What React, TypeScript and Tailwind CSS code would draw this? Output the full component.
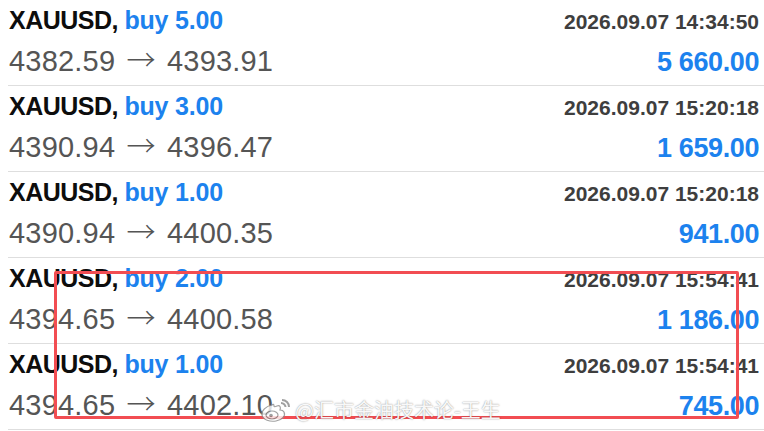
import React from "react";

type Row = { lot: string; from: string; to: string; time: string; profit: string };

const rows: Row[] = [
  { lot: "5.00", from: "4382.59", to: "4393.91", time: "2026.09.07 14:34:50", profit: "5 660.00" },
  { lot: "3.00", from: "4390.94", to: "4396.47", time: "2026.09.07 15:20:18", profit: "1 659.00" },
  { lot: "1.00", from: "4390.94", to: "4400.35", time: "2026.09.07 15:20:18", profit: "941.00" },
  { lot: "2.00", from: "4394.65", to: "4400.58", time: "2026.09.07 15:54:41", profit: "1 186.00" },
  { lot: "1.00", from: "4394.65", to: "4402.10", time: "2026.09.07 15:54:41", profit: "745.00" },
];

function WeiboLogo() {
  return (
    <svg width="32" height="26" viewBox="0 0 32 26" className="opacity-80">
      <g fill="#ffffff" stroke="#8a8a8a" strokeWidth="1.2">
        <path d="M12 8 C6 9 1 14 2 18 C3 23 10 25 16 24 C22 23 26 19 24 15 C23 13 21 13 20 13 C21 10 20 8 17 9 C15 10 14 10 14 9 C14 7 13 7 12 8 Z" />
        <ellipse cx="12" cy="18" rx="6" ry="4" />
        <circle cx="11" cy="18.5" r="1.8" fill="#8a8a8a" stroke="none" />
        <path d="M22 3 C26 3 29 6 29 10" fill="none" strokeWidth="2" />
        <path d="M21 6 C23.5 6 25.5 8 25.5 10" fill="none" strokeWidth="2" />
      </g>
    </svg>
  );
}

export default function App() {
  return (
    <div
      className="relative w-[764px] h-[431px] overflow-hidden bg-white"
      style={{ fontFamily: "'Liberation Sans', Arial, sans-serif" }}
    >
      <div className="flex flex-col">
        {rows.map((r, i) => (
          <div key={i} className="h-[86px] ml-2 border-b border-[#dedede] pl-[1px] pr-[5px] pt-[8px]">
            <div className="flex justify-between items-baseline h-[25px]">
              <span className="text-[25px] leading-[25px] font-bold tracking-[-0.5px] text-[#0d0d0d]">
                XAUUSD, <span className="text-[#1c82ee] tracking-[-0.2px]">buy {r.lot}</span>
              </span>
              <span className="text-[21px] leading-[25px] font-bold text-[#3e3e3e]">
                {r.time}
              </span>
            </div>
            <div className="flex justify-between items-baseline mt-[14px] h-[29px]">
              <span className="text-[29px] leading-[29px] text-[#555555] tracking-[0.2px]">
                {r.from}{" "}
                <span
                  style={{ fontFamily: "'Noto Sans CJK SC', 'DejaVu Sans', sans-serif" }}
                  className="leading-[0px] font-light mx-[3px]"
                >
                  →
                </span>{" "}
                {r.to}
              </span>
              <span className="text-[27px] leading-[29px] font-bold text-[#1c82ee] tracking-[-0.4px]">
                {r.profit}
              </span>
            </div>
          </div>
        ))}
      </div>

      <div className="absolute left-[54px] top-[271px] w-[685px] h-[148px] border-[3px] border-[#f24d52] rounded-[2px]" />

      <div className="absolute left-[260px] top-[397px] flex items-center gap-[3px]">
        <WeiboLogo />
        <span
          className="text-[20px] leading-[24px] text-white/95 [text-shadow:0_0_1.5px_rgba(0,0,0,0.5)]"
          style={{ fontFamily: "'Noto Sans CJK SC', 'Liberation Sans', sans-serif" }}
        >
          @汇市金油技术论-王生
        </span>
      </div>
    </div>
  );
}
